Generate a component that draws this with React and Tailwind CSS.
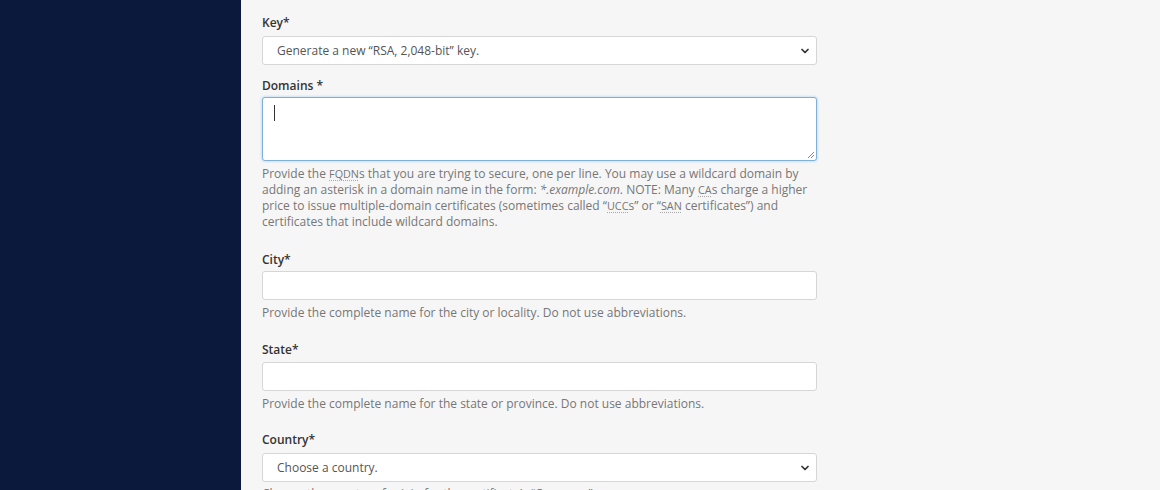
import { ChevronDown } from "lucide-react";

const Abbr = ({ children }) => (
    <abbr className="text-[10.8px] underline decoration-dotted decoration-[#aaa] underline-offset-2">{children}</abbr>
);

const Field = ({ label, children, help, labelGap = "mb-[5px]", helpGap = "mt-[4px]" }) => (
    <div className="flex flex-col">
        <label className={`text-[12px] font-semibold text-[#333] leading-4 ${labelGap}`}>{label}</label>
        {children}
        {help && <p className={`text-[12px] leading-4 text-[#777] ${helpGap}`}>{help}</p>}
    </div>
);

const Select = ({ value }) => (
    <div className="h-[29px] bg-white border border-[#d6d6d6] rounded-[3px] flex items-center justify-between pl-[14px] pr-[5px]">
        <span className="text-[12px] text-[#555]">{value}</span>
        <ChevronDown className="w-[12px] h-[12px] text-[#333]" strokeWidth={3.5} />
    </div>
);

const TextInput = () => (
    <div className="h-[29px] bg-white border border-[#d6d6d6] rounded-[3px]" />
);

export default function App() {
    return (
        <div className="w-[1160px] h-[490px] flex overflow-hidden bg-[#f6f6f6]" style={{ fontFamily: '"Open Sans", sans-serif' }}>
            <div className="w-[241px] shrink-0 bg-[#0b1a3c]" />
            <div className="w-[555px] ml-[21px] pt-[15px] flex flex-col">
                <Field label="Key*">
                    <Select value="Generate a new “RSA, 2,048-bit” key." />
                </Field>
                <div className="mt-[13px]">
                    <Field
                        label="Domains *"
                        labelGap="mb-[3px]"
                        helpGap="mt-[5px]"
                        help={
                            <>
                                Provide the <Abbr>FQDN</Abbr>s that you are trying to secure, one per line. You may use a wildcard domain by adding an asterisk in a domain name in the form: <i>*.example.com</i>. NOTE: Many <Abbr>CA</Abbr>s charge a higher price to issue multiple-domain certificates (sometimes called “<Abbr>UCC</Abbr>s” or “<Abbr>SAN</Abbr> certificates”) and certificates that include wildcard domains.
                            </>
                        }
                    >
                        <div className="relative h-[64px] bg-white border border-[#7fb0d8] rounded-[3px] shadow-[0_0_3px_rgba(102,175,233,0.6)]">
                            <div className="absolute left-[11px] top-[7px] w-px h-[16px] bg-[#333]" />
                            <svg className="absolute right-[1px] bottom-[1px]" width="8" height="8" viewBox="0 0 8 8">
                                <path d="M7 1L1 7M7 4L4 7" stroke="#888" strokeWidth="1" />
                            </svg>
                        </div>
                    </Field>
                </div>
                <div className="mt-[22px]">
                    <Field label="City*" labelGap="mb-[3px]" helpGap="mt-[5px]" help="Provide the complete name for the city or locality. Do not use abbreviations.">
                        <TextInput />
                    </Field>
                </div>
                <div className="mt-[21px]">
                    <Field label="State*" labelGap="mb-[4px]" helpGap="mt-[5px]" help="Provide the complete name for the state or province. Do not use abbreviations.">
                        <TextInput />
                    </Field>
                </div>
                <div className="mt-[20px]">
                    <Field label="Country*" help="Choose the country of origin for the certificate’s “Company”.">
                        <Select value="Choose a country." />
                    </Field>
                </div>
            </div>
        </div>
    );
}
